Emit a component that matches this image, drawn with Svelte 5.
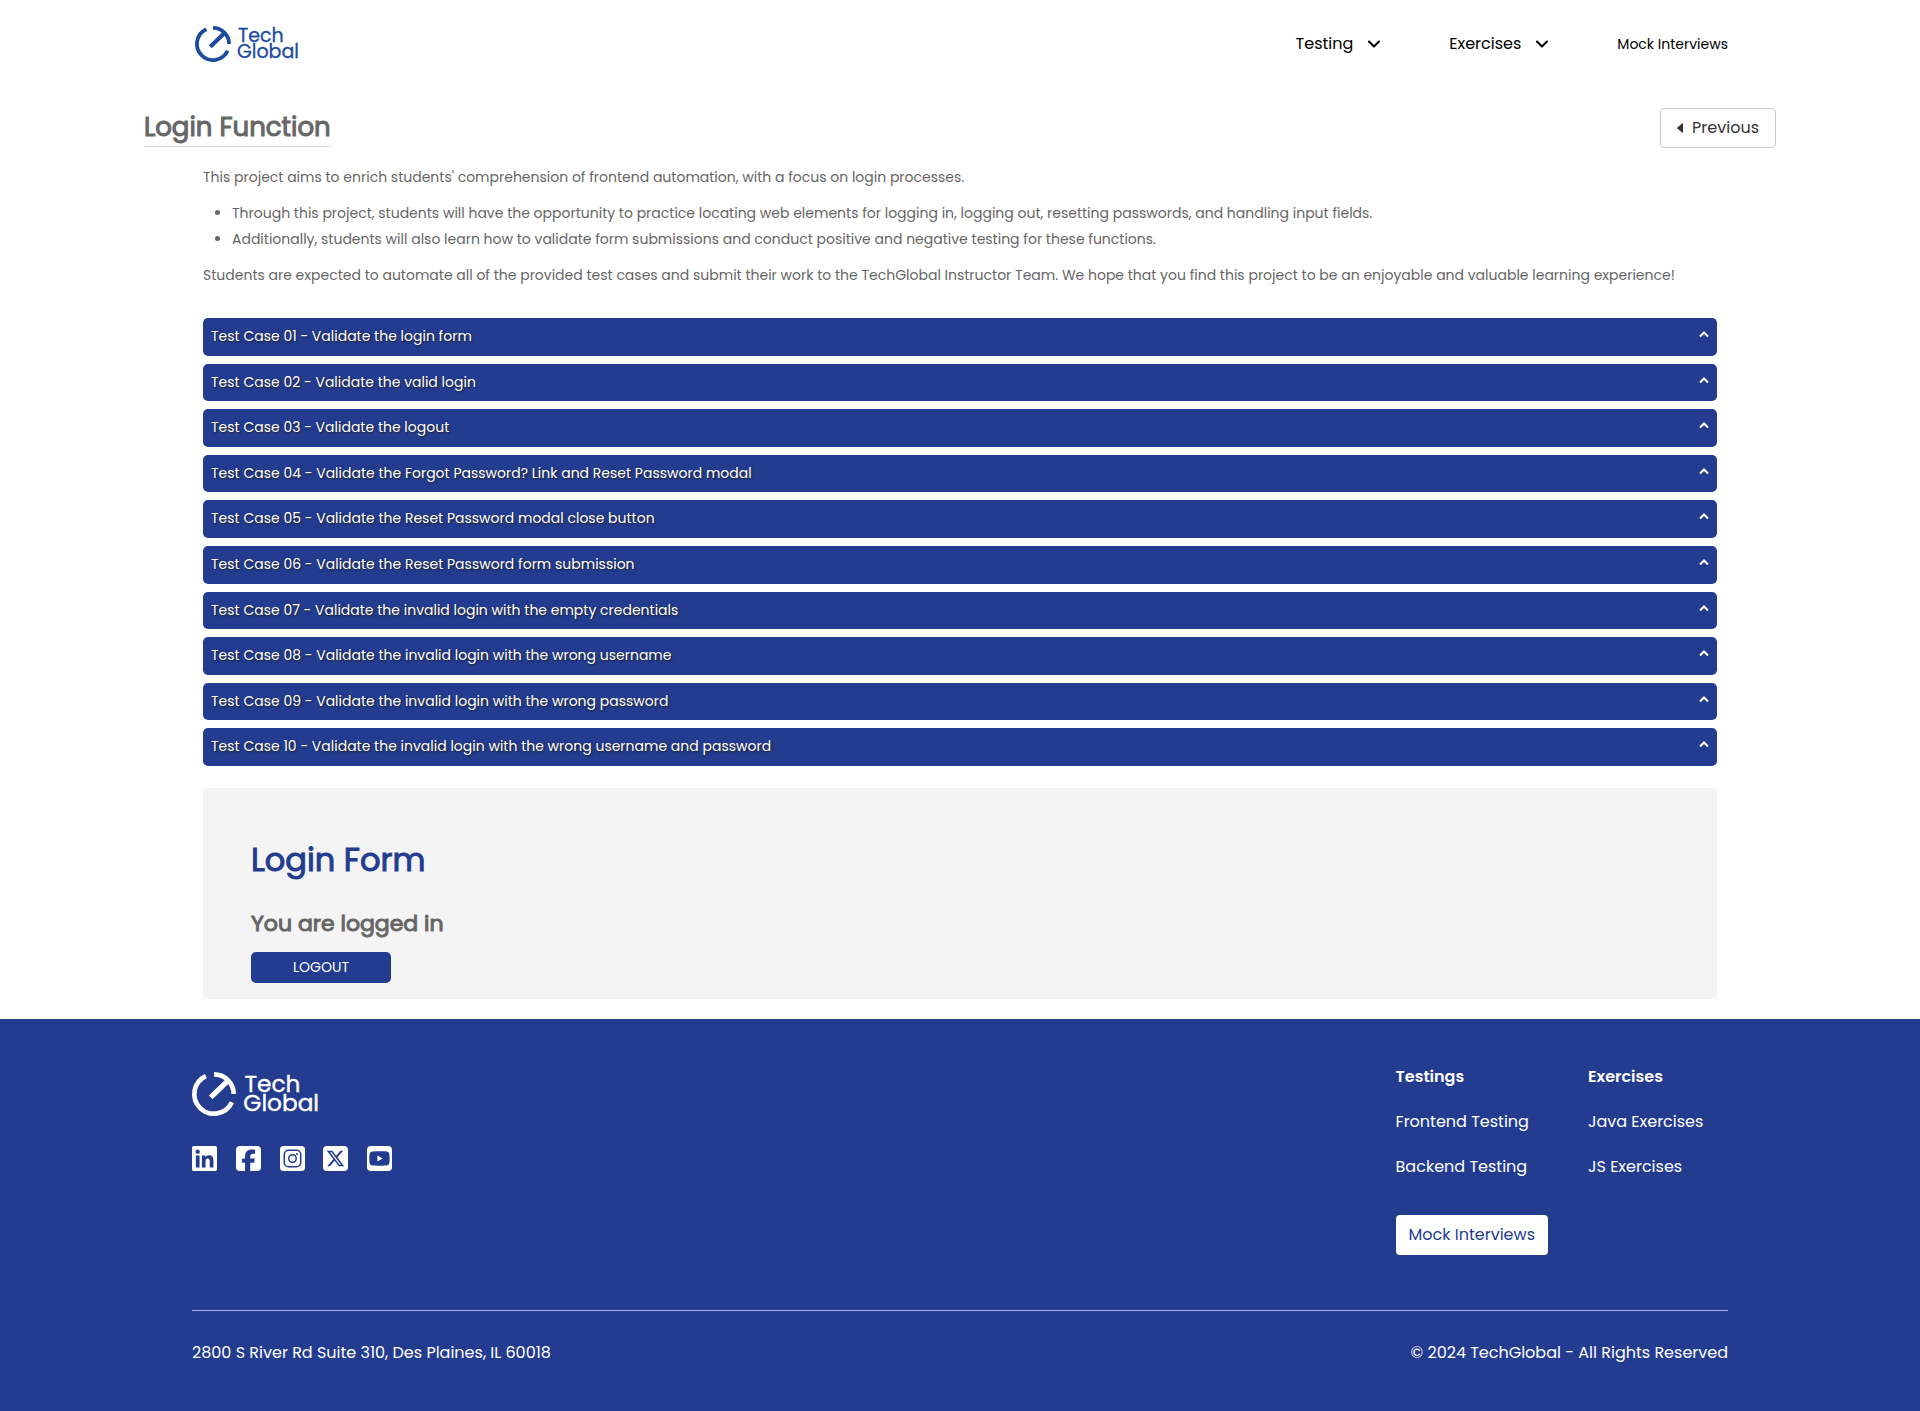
<script>
  const cases = [
    'Validate the login form',
    'Validate the valid login',
    'Validate the logout',
    'Validate the Forgot Password? Link and Reset Password modal',
    'Validate the Reset Password modal close button',
    'Validate the Reset Password form submission',
    'Validate the invalid login with the empty credentials',
    'Validate the invalid login with the wrong username',
    'Validate the invalid login with the wrong password',
    'Validate the invalid login with the wrong username and password'
  ];
  const menus = ['Testing', 'Exercises'];
  const columns = [
    { title: 'Testings', links: ['Frontend Testing', 'Backend Testing'] },
    { title: 'Exercises', links: ['Java Exercises', 'JS Exercises'] }
  ];
  const socials = [
    {
      name: 'LinkedIn',
      d: 'M416 32H31.9C14.3 32 0 46.5 0 64.3v383.4C0 465.5 14.3 480 31.9 480H416c17.6 0 32-14.5 32-32.3V64.3c0-17.8-14.4-32.3-32-32.3zM135.4 416H69V202.2h66.5V416zm-33.2-243c-21.3 0-38.5-17.3-38.5-38.5S80.9 96 102.2 96c21.2 0 38.5 17.3 38.5 38.5 0 21.3-17.2 38.5-38.5 38.5zm282.1 243h-66.4V312c0-24.8-.5-56.7-34.5-56.7-34.6 0-39.9 27-39.9 54.9V416h-66.4V202.2h63.7v29.2h.9c8.9-16.8 30.6-34.5 62.9-34.5 67.2 0 79.7 44.3 79.7 101.9V416z'
    },
    {
      name: 'Facebook',
      d: 'M64 32C28.7 32 0 60.7 0 96V416c0 35.3 28.7 64 64 64h98.2V334.2H109.4V256h52.8V222.3c0-87.1 39.4-127.5 125-127.5c16.2 0 44.2 3.2 55.7 6.4V172c-6-.6-16.5-1-29.6-1c-42 0-58.2 15.9-58.2 57.2V256h83.6l-14.4 78.2H255V480H384c35.3 0 64-28.7 64-64V96c0-35.3-28.7-64-64-64H64z'
    },
    { name: 'Instagram', d: '' },
    {
      name: 'X',
      d: 'M64 32C28.7 32 0 60.7 0 96V416c0 35.3 28.7 64 64 64H384c35.3 0 64-28.7 64-64V96c0-35.3-28.7-64-64-64H64zm297.1 84L257.3 234.6 379.4 396H283.8L209 298.1 123.3 396H75.8l111-126.9L69.7 116h98l67.7 89.5L313.6 116h47.5zM323.3 367.6L153.4 142.9H125.1L296.9 367.6h26.3z'
    },
    {
      name: 'YouTube',
      d: 'M282 256.2l-95.2-54.1V310.3L282 256.2zM384 32H64C28.7 32 0 60.7 0 96V416c0 35.3 28.7 64 64 64H384c35.3 0 64-28.7 64-64V96c0-35.3-28.7-64-64-64zm14.4 136.1c7.6 28.6 7.6 88.2 7.6 88.2s0 59.6-7.6 88.1c-4.2 15.8-16.5 27.7-32.2 31.9C337.9 384 224 384 224 384s-113.9 0-142.2-7.6c-15.7-4.2-28-16.1-32.2-31.9C42 315.9 42 256.3 42 256.3s0-59.7 7.6-88.2c4.2-15.8 16.5-28.2 32.2-32.4C110.1 128 224 128 224 128s113.9 0 142.2 7.7c15.7 4.2 28 16.6 32.2 32.4z'
    }
  ];
  let open = $state(-1);
</script>

{#snippet logo()}
  <svg class="logo" viewBox="0 0 106 36" aria-hidden="true">
    <g fill="none" stroke="currentColor" stroke-width="3.8">
      <path d="M18 1.9A16.1 16.1 0 0 1 34.1 18" />
      <path d="M32.6 24.8A16.1 16.1 0 1 1 11.4 3.3" />
      <path d="M15.3 20.8 29.5 7" stroke-width="4.2" />
    </g>
    <text stroke="currentColor" stroke-width="0.3"><tspan x="43" y="16">Tech</tspan><tspan x="42" y="32">Global</tspan></text>
  </svg>
{/snippet}

<header>
  <a class="brand" href="#home" aria-label="TechGlobal home">{@render logo()}</a>
  <nav>
    {#each menus as menu}
      <button class="menu" type="button">
        {menu}
        <svg width="12" height="8" viewBox="0 0 12 8" aria-hidden="true">
          <path d="M1 1.5 6 6.5 11 1.5" fill="none" stroke="currentColor" stroke-width="2" stroke-linecap="round" stroke-linejoin="round" />
        </svg>
      </button>
    {/each}
    <a class="mock" href="#mock">Mock Interviews</a>
  </nav>
</header>

<main>
  <div class="heading">
    <h1>Login Function</h1>
    <button class="previous" type="button">
      <svg width="6" height="10" viewBox="0 0 6 10" aria-hidden="true"><path d="M6 .6v8.8Q6 10 5.4 9.7L.4 5.6Q0 5 .4 4.4L5.4.3Q6 0 6 .6z" fill="currentColor" /></svg>
      Previous
    </button>
  </div>

  <div class="content">
    <p>This project aims to enrich students' comprehension of frontend automation, with a focus on login processes.</p>
    <ul>
      <li>Through this project, students will have the opportunity to practice locating web elements for logging in, logging out, resetting passwords, and handling input fields.</li>
      <li>Additionally, students will also learn how to validate form submissions and conduct positive and negative testing for these functions.</li>
    </ul>
    <p>Students are expected to automate all of the provided test cases and submit their work to the TechGlobal Instructor Team. We hope that you find this project to be an enjoyable and valuable learning experience!</p>

    <div class="cases">
      {#each cases as title, i}
        <button type="button" aria-expanded={open === i} onclick={() => (open = open === i ? -1 : i)}>
          <span>Test Case {String(i + 1).padStart(2, '0')} - {title}</span>
          <svg width="10" height="7" viewBox="0 0 10 7" aria-hidden="true">
            <path d="M1 5.5 5 1.5 9 5.5" fill="none" stroke="currentColor" stroke-width="2" />
          </svg>
        </button>
      {/each}
    </div>

    <section class="panel">
      <h2>Login Form</h2>
      <h3>You are logged in</h3>
      <button type="button">LOGOUT</button>
    </section>
  </div>
</main>

<footer>
  <div class="top">
    <div class="company">
      <a class="brand large" href="#home" aria-label="TechGlobal home">{@render logo()}</a>
      <div class="socials">
        {#each socials as social}
          <a href="#social" aria-label={social.name}>
            <svg viewBox="0 32 448 448" aria-hidden="true">
              {#if social.d}
                <path d={social.d} fill="currentColor" />
              {:else}
                <rect y="32" width="448" height="448" rx="64" fill="currentColor" />
                <g class="cut" fill="none" stroke-width="27">
                  <rect x="77" y="109" width="294" height="294" rx="76" />
                  <circle cx="224" cy="256" r="67" />
                  <circle class="dot" cx="304" cy="177" r="18" />
                </g>
              {/if}
            </svg>
          </a>
        {/each}
      </div>
    </div>
    <div class="links">
      {#each columns as column, i}
        <div class="column">
          <h4>{column.title}</h4>
          {#each column.links as link}
            <a href="#page">{link}</a>
          {/each}
          {#if i === 0}
            <a class="interviews" href="#mock">Mock Interviews</a>
          {/if}
        </div>
      {/each}
    </div>
  </div>
  <div class="bottom">
    <span>2800 S River Rd Suite 310, Des Plaines, IL 60018</span>
    <span>© 2024 TechGlobal - All Rights Reserved</span>
  </div>
</footer>

<style>
  :global(body) {
    margin: 0;
    background: #fff;
    font-family: Poppins, Inter, sans-serif;
    font-size: 16px;
    line-height: 24px;
    color: #666;
  }
  button {
    font: inherit;
    cursor: pointer;
  }
  a {
    color: inherit;
    text-decoration: none;
  }
  h1, h2, h3, h4, p, ul {
    margin: 0;
  }
  h1, h2, h3 {
    font-weight: 400;
    -webkit-text-stroke: 1px currentColor;
  }
  svg {
    display: block;
    flex: none;
  }

  header {
    display: flex;
    justify-content: space-between;
    align-items: center;
    padding: 0 10%;
    height: 88px;
  }
  .brand {
    color: #1d4ba0;
    margin-left: 3px;
  }
  .logo {
    height: 36px;
    overflow: visible;
  }
  .logo text {
    font-size: 19px;
    fill: currentColor;
  }
  .brand.large {
    color: #fff;
    margin-left: 0;
  }
  .large .logo {
    height: 44px;
  }
  nav {
    display: flex;
    align-items: center;
    color: #000;
    gap: 69px;
  }
  .menu {
    display: flex;
    align-items: center;
    gap: 15px;
    padding: 0;
    border: 0;
    background: none;
    color: #000;
  }
  .mock {
    font-size: 14px;
  }

  .heading {
    display: flex;
    justify-content: space-between;
    align-items: center;
    margin: 20px 144px 16px;
  }
  h1 {
    border-bottom: 1px solid #ddd;
    font-size: 26px;
    line-height: 37px;
  }
  .previous {
    display: flex;
    align-items: center;
    gap: 9px;
    padding: 7px 16px;
    border: 1px solid #ccc;
    border-radius: 4px;
    background: #fff;
    color: #333;
  }

  .content {
    margin: 0 203px 20px;
    font-size: 14px;
    line-height: 26px;
  }
  ul {
    margin: 10px 0;
    padding-left: 29px;
  }
  .cases {
    display: flex;
    flex-direction: column;
    gap: 8px;
    min-height: 448px;
    margin: 30px 0 22px;
  }
  .cases button {
    flex: 1;
    display: flex;
    justify-content: space-between;
    align-items: flex-start;
    padding: 8px;
    border: 0;
    border-radius: 5px;
    background: #233c90;
    color: #fff;
    line-height: 20px;
    text-align: left;
    text-shadow: 1px 1px 2px #222;
  }
  .cases svg {
    margin-top: 5px;
  }

  .panel {
    padding: 48px 48px 16px;
    background: #f4f4f4;
  }
  .panel h2 {
    color: #233c90;
    font-size: 32px;
    line-height: 48px;
  }
  .panel h3 {
    margin: 20px 0 8px;
    font-size: 22px;
    line-height: 40px;
  }
  .panel button {
    display: block;
    width: 140px;
    padding: 5px 0;
    border: 0;
    border-radius: 5px;
    background: #233c90;
    color: #fff;
    line-height: 21px;
  }

  footer {
    padding: 46px 10%;
    background: #233c90;
    color: #fff;
  }
  .top {
    display: flex;
    justify-content: space-between;
    padding-bottom: 55px;
    border-bottom: 1px solid #a3aef0;
  }
  .company {
    padding-top: 7px;
  }
  .socials {
    display: flex;
    justify-content: space-between;
    width: 200px;
    margin-top: 30px;
  }
  .socials svg {
    width: 25px;
    height: 25px;
  }
  .cut {
    stroke: #233c90;
  }
  .dot {
    stroke: none;
    fill: #233c90;
  }
  .links {
    display: flex;
    gap: 40px;
  }
  .column {
    display: flex;
    flex-direction: column;
    align-items: flex-start;
    gap: 21px;
    min-width: 140px;
  }
  h4 {
    font-size: 16px;
    font-weight: 600;
  }
  .interviews {
    margin-top: 15px;
    padding: 8px 13px;
    border-radius: 4px;
    background: #fff;
    color: #233c90;
  }
  .bottom {
    display: flex;
    justify-content: space-between;
    padding-top: 30px;
  }
</style>
